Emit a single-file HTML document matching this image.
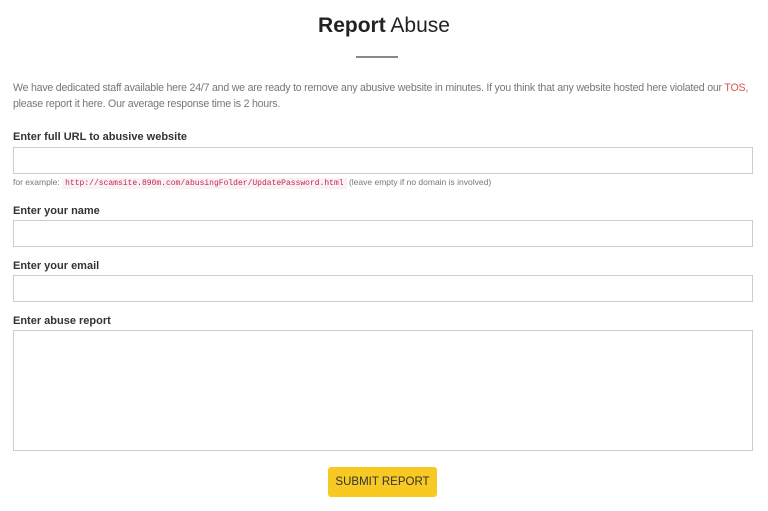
<!DOCTYPE html>
<html><head><style>
body{margin:0;background:#fff;font-family:"Liberation Sans",sans-serif;width:768px;height:511px;position:relative;overflow:hidden}
.a{position:absolute}
h1{position:absolute;top:14px;left:0;width:768px;text-align:center;margin:0;font-size:21px;font-weight:normal;color:#222}
.line{left:356px;top:56px;width:42px;height:2px;background:#888}
p{position:absolute;left:13px;top:80px;margin:0;font-size:10.6px;letter-spacing:-0.22px;line-height:16px;color:#777;width:752px;white-space:nowrap}
p span{color:#d9534f}
label{position:absolute;left:13px;font-size:11px;font-weight:bold;color:#333}
.in{position:absolute;left:13px;width:738px;border:1px solid #ccc;background:#fff}
.ex{left:13px;top:177px;font-size:8.5px;color:#777}
code{font-family:"Liberation Mono",monospace;color:#c7254e;background:#f9f2f4;padding:1px 3px;font-size:8px}
.btn{left:328px;top:467px;width:109px;height:30px;background:#f8c923;border-radius:3px;color:#333;font-size:11.5px;text-align:center;line-height:31px}
</style></head><body>
<h1><b>Report</b> Abuse</h1>
<div class="a line"></div>
<p>We have dedicated staff available here 24/7 and we are ready to remove any abusive website in minutes. If you think that any website hosted here violated our <span>TOS</span>,<br>please report it here. Our average response time is 2 hours.</p>
<label style="top:131px">Enter full URL to abusive website</label>
<div class="in" style="top:147px;height:25px"></div>
<div class="a ex">for example: <code>http://scamsite.890m.com/abusingFolder/UpdatePassword.html</code> (leave empty if no domain is involved)</div>
<label style="top:205px">Enter your name</label>
<div class="in" style="top:220px;height:25px"></div>
<label style="top:260px">Enter your email</label>
<div class="in" style="top:275px;height:25px"></div>
<label style="top:315px">Enter abuse report</label>
<div class="in" style="top:330px;height:119px"></div>
<div class="a btn">SUBMIT REPORT</div>
</body></html>
